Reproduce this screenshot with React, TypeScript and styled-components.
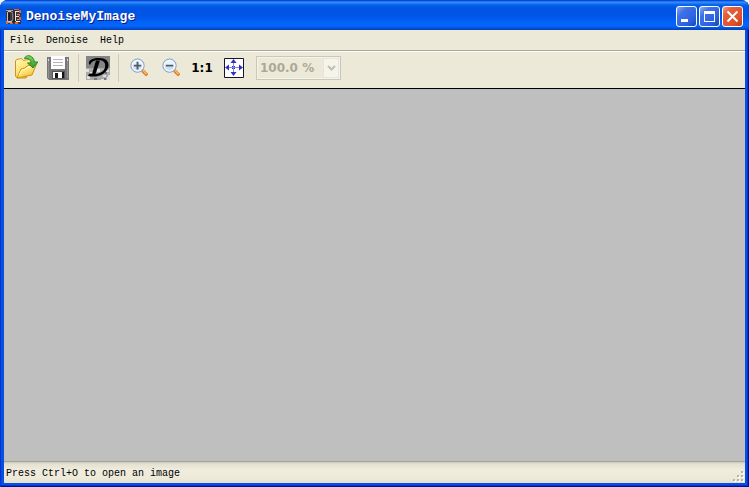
import React from "react";
import styled, { createGlobalStyle, css } from "styled-components";

const GlobalStyle = createGlobalStyle`
  * { box-sizing: border-box; }
  body { margin: 0; background: #f4f4ee; }
  button, select { font: inherit; }
`;

const Window = styled.div`
  display: flex;
  flex-direction: column;
  height: 100vh;
  padding: 0 4px 4px;
  border-radius: 8px 8px 0 0;
  overflow: hidden;
  background: #0450e0;
  box-shadow: inset 1px 0 #0a31d0, inset -1px -1px #00138c, inset -2px -2px #0831d9;
  font-family: "Liberation Mono", monospace;
  font-size: 10px;
  color: #000;
`;

const TitleBar = styled.header`
  display: flex;
  align-items: center;
  gap: 4px;
  height: 30px;
  flex: none;
  margin: 0 -4px;
  padding: 3px 6px 0;
  background: linear-gradient(
    #0831d9 0, #0a5be0 1px, #3a93ff 2px, #2880f4 3px, #0562e8 5px, #0054e3 8px,
    #0055e5 16px, #0262f8 22px, #0366fc 26px, #0054dc 28px, #0140b8 30px
  );
`;

const Title = styled.h1`
  flex: 1;
  margin: 0;
  font-size: 13px;
  line-height: 16px;
  font-weight: bold;
  color: #fff;
  text-shadow: 1px 1px #0a1883;
`;

const Controls = styled.div`
  display: flex;
  gap: 2px;
`;

const ControlButton = styled.button<{ $close?: boolean }>`
  display: block;
  width: 21px;
  height: 21px;
  padding: 0;
  border: 1px solid #fff;
  border-radius: 3px;
  background: ${(p) =>
    p.$close
      ? "linear-gradient(135deg, #f0a088 0, #e4603c 25%, #e0512b 70%, #c03c14 100%)"
      : "linear-gradient(135deg, #8aabf4 0, #3f72e8 28%, #2b62e0 70%, #1747b8 100%)"};
  svg { display: block; }
`;

const MenuBar = styled.nav`
  display: flex;
  gap: 12px;
  flex: none;
  height: 20px;
  padding: 0 6px;
  background: #ece9d8;
`;

const MenuButton = styled.button`
  padding: 1px 0 0;
  border: 0;
  background: none;
  color: #000;
  line-height: 16px;
`;

const Toolbar = styled.div`
  display: flex;
  align-items: center;
  flex: none;
  height: 39px;
  padding: 0 6px 4px;
  border-top: 1px solid #aca899;
  border-bottom: 1px solid #000;
  box-shadow: inset 0 1px #fff;
  background: #ece9d8;
`;

const ToolButton = styled.button`
  display: grid;
  place-items: center;
  width: 32px;
  height: 30px;
  padding: 0;
  border: 0;
  background: none;
  color: #000;
  font: bold 12px "DejaVu Sans", sans-serif;
  svg { display: block; }
`;

const Separator = styled.span`
  width: 1px;
  height: 28px;
  margin: 0 3px 0 4px;
  background: #cfccbb;
`;

const disabledEdge = css`1px solid #c9c7ba`;

const ZoomBox = styled.label`
  display: flex;
  position: relative;
  width: 85px;
  height: 24px;
  margin-left: 6px;
  border: ${disabledEdge};
  background: #ece9d8;
  box-shadow: inset 0 0 0 1px #f5f4ea;
`;

const ZoomSelect = styled.select`
  appearance: none;
  width: 100%;
  padding: 0 0 0 3px;
  border: 0;
  background: none;
  font: bold 12px "DejaVu Sans", sans-serif;
  color: #aca899;
  opacity: 1;
`;

const Arrow = styled.span`
  position: absolute;
  top: 1px;
  right: 1px;
  bottom: 1px;
  display: grid;
  place-items: center;
  width: 16px;
  border: 1px solid #e8e6db;
  background: #f5f4ea;
  pointer-events: none;
`;

const Canvas = styled.main`
  flex: 1;
  background: #bfbfbf;
`;

const StatusBar = styled.footer`
  display: flex;
  justify-content: space-between;
  align-items: center;
  flex: none;
  height: 22px;
  padding: 2px 0 0 2px;
  border-top: 1px solid #a5a396;
  background: linear-gradient(#c9c7ba 0, #e4e1d1 2px, #f0eddf 8px, #ece9d8 17px, #e5e1cd 21px);
  line-height: 16px;
  svg { display: block; align-self: flex-end; }
`;

const AppIcon = () => (
  <svg width="16" height="16" viewBox="0 0 16 16" aria-hidden="true">
    <path fill="#3c3540" d="M0 0h15v15H0z" />
    <path fill="#a8a6a5" d="M0 1h7v1H0zm0 11h6v2H0zM11 5h3v1h-3zm0 5h3v1h-3z" />
    <path fill="#e36132" d="M8 0h5v1H8zm5 1h2v3h-2zm-4 12h3v2H9zm4-5h2v3h-2zM0 13h2v2H0zm4 1h3v1H4zM13 5h1v2h-1z" />
    <path fill="none" stroke="#c9c2bb" d="M1.500 3v9M2 2.500h3l2 2v6l-2 2H2" />
    <path fill="none" stroke="#f2e5cd" d="M9.500 2v10M10 2.500h3M10 7.500h3M10 12.500h4" />
    <path stroke="#080812" d="M3 4v7M8 3v10" />
  </svg>
);

const MinimizeIcon = () => (
  <svg width="19" height="19" aria-hidden="true"><path fill="#fff" d="M4 12h7v3H4z" /></svg>
);
const MaximizeIcon = () => (
  <svg width="19" height="19" aria-hidden="true"><path fill="#fff" fillRule="evenodd" d="M4 4h11v11H4zm1 3v7h9V7z" /></svg>
);
const CloseIcon = () => (
  <svg width="19" height="19" aria-hidden="true"><path stroke="#fff" strokeWidth="2" d="m4.5 4.5 10 10m0-10-10 10" /></svg>
);

const OpenIcon = () => (
  <svg width="24" height="26" viewBox="0 0 24 26" aria-hidden="true">
    <defs>
      <linearGradient id="folder" x1="0" y1="0" x2="0.6" y2="1"><stop stopColor="#fffac0" /><stop offset=".55" stopColor="#ffe477" /><stop offset="1" stopColor="#edbb35" /></linearGradient>
      <linearGradient id="arrow" x1="0" y1="0" x2="0" y2="1"><stop stopColor="#83d367" /><stop offset="1" stopColor="#289b25" /></linearGradient>
    </defs>
    <path fill="url(#folder)" stroke="#cd9418" strokeLinejoin="round" d="M1.500 21V6l1-1.500 5-1 2 2 7-1.500 1 1.500v5L12 23H3z" />
    <path fill="url(#folder)" stroke="#cd9418" strokeLinejoin="round" d="m3 23 4-9 4-1 2-2 9.500-2L18 20z" />
    <path fill="none" stroke="#fffbd0" d="m5 20 3-5 4-1 2-2 6-1" />
    <path fill="url(#arrow)" stroke="#258a24" strokeLinejoin="round" d="M10.500 3.500c1-4 8.500-4.500 10 3.500H24l-5 6L13.500 8H17c-.5-4-3-5-6.500-4.500z" />
  </svg>
);

const SaveIcon = () => (
  <svg width="22" height="24" viewBox="0 0 22 24" aria-hidden="true">
    <path fill="#77777a" d="M0 1h22v23H2l-2-2z" />
    <path fill="#929294" d="M1 2h1v20H1zm19 0h1v20h-1z" />
    <path fill="#fff" d="M4 0h14v13H4z" />
    <path stroke="#b6b6b6" d="M6 3.500h10M6 6.500h10M6 9.500h10" />
    <path fill="#d8d8d8" d="M1 3h1v2H1zm19 0h1v2h-1z" />
    <path fill="#555" d="M5 15h13v8H5z" />
    <path fill="#fff" d="M6 16h11v6H6z" />
    <path fill="#151515" d="M8 17h3v5H8zm7-1h2v6h-2z" />
  </svg>
);

const DenoiseIcon = () => (
  <svg width="24" height="24" viewBox="0 0 24 24" aria-hidden="true">
    <path fill="#858585" d="M0 0h24v24H0z" />
    <path fill="#aaa" d="M0 12h24v12H0z" />
    <path fill="#dedede" d="M0 13h3v3H0zm4 3h3v2H4zm-3 4h3v3H1zm10-7h3v3h-3zm8 1h4v2h-4zm-2 5h3v2h-3zm4 2h3v3h-3zm-6 2h3v1h-3zm7-4h2v2h-2z" />
    <path fill="#767676" d="M3 17h3v2H3zm5 5h3v2H8zm11-6h2v2h-2zm-1 6h2v2h-2z" />
    <path fill="#000" d="M10 4.500h4L9.500 18H6z" />
    <path fill="#000" fillRule="evenodd" d="M3 8c-1-4 4-6 10-6 13 0 11 12 4 16-5 3-10 3-15 2l1-2c14 1 17-5 16-10-1-5-11-5-14-1-.5 2-1 2-2 1z" />
  </svg>
);

const MagnifierIcon = ({ plus = false }: { plus?: boolean }) => (
  <svg width="20" height="20" viewBox="-2 0 21 21" aria-hidden="true">
    <path stroke="#d06a22" strokeWidth="3.500" strokeLinecap="round" d="m14 14 3 3" />
    <path stroke="#ffb349" strokeWidth="2" strokeLinecap="round" d="m14 13.500 3 3" />
    <circle cx="8" cy="8" r="7" fill="#d5e8fa" stroke="#7e9fc3" />
    <circle cx="8" cy="8" r="5.500" fill="#e7f3fe" stroke="#fff" />
    <path fill="#c9dff6" d="M3.500 9h9c-.5 5-8.500 5-9 0z" />
    <path stroke="#515a65" strokeWidth="2" d={plus ? "M4 8h8M8 4v8" : "M4 8h8"} />
  </svg>
);

const FitIcon = () => (
  <svg width="20" height="20" viewBox="0 0 20 20" aria-hidden="true">
    <path fill="#fff" stroke="#15152c" d="M.5.5h19v19H.5z" />
    <path stroke="#8686e6" d="M3 9.500h14M9.500 3v14" />
    <path fill="#2f2fcb" d="m9.500 1 3 4h-6zm0 17-3-4h6zM1 9.500l4-3v6zm18 0-4-3v6zM8 8h1v1H8zm2 0h1v1h-1zm-2 2h1v1H8zm2 0h1v1h-1z" />
  </svg>
);

const Grip = () => (
  <svg width="13" height="13" viewBox="0 0 13 13" aria-hidden="true">
    <path fill="#fff" d="M10 2h2v2h-2zM6 6h2v2H6zm4 0h2v2h-2zM2 10h2v2H2zm4 0h2v2H6zm4 0h2v2h-2z" />
    <path fill="#b8b4a0" d="M9 1h2v2H9zM5 5h2v2H5zm4 0h2v2H9zM1 9h2v2H1zm4 0h2v2H5zm4 0h2v2H9z" />
  </svg>
);

export default function App() {
  return (
    <>
      <GlobalStyle />
      <Window>
        <TitleBar>
          <AppIcon />
          <Title>DenoiseMyImage</Title>
          <Controls>
            <ControlButton aria-label="Minimize"><MinimizeIcon /></ControlButton>
            <ControlButton aria-label="Maximize"><MaximizeIcon /></ControlButton>
            <ControlButton $close aria-label="Close"><CloseIcon /></ControlButton>
          </Controls>
        </TitleBar>
        <MenuBar>
          <MenuButton>File</MenuButton>
          <MenuButton>Denoise</MenuButton>
          <MenuButton>Help</MenuButton>
        </MenuBar>
        <Toolbar role="toolbar">
          <ToolButton aria-label="Open"><OpenIcon /></ToolButton>
          <ToolButton aria-label="Save"><SaveIcon /></ToolButton>
          <Separator />
          <ToolButton aria-label="Denoise"><DenoiseIcon /></ToolButton>
          <Separator />
          <ToolButton aria-label="Zoom in"><MagnifierIcon plus /></ToolButton>
          <ToolButton aria-label="Zoom out"><MagnifierIcon /></ToolButton>
          <ToolButton>1:1</ToolButton>
          <ToolButton aria-label="Fit to window"><FitIcon /></ToolButton>
          <ZoomBox>
            <ZoomSelect disabled aria-label="Zoom level"><option>100.0 %</option></ZoomSelect>
            <Arrow>
              <svg width="9" height="6" aria-hidden="true"><path fill="none" stroke="#c1bfb0" strokeWidth="2" d="m1 1 3.500 3.500L8 1" /></svg>
            </Arrow>
          </ZoomBox>
        </Toolbar>
        <Canvas />
        <StatusBar>
          <span>Press Ctrl+O to open an image</span>
          <Grip />
        </StatusBar>
      </Window>
    </>
  );
}
